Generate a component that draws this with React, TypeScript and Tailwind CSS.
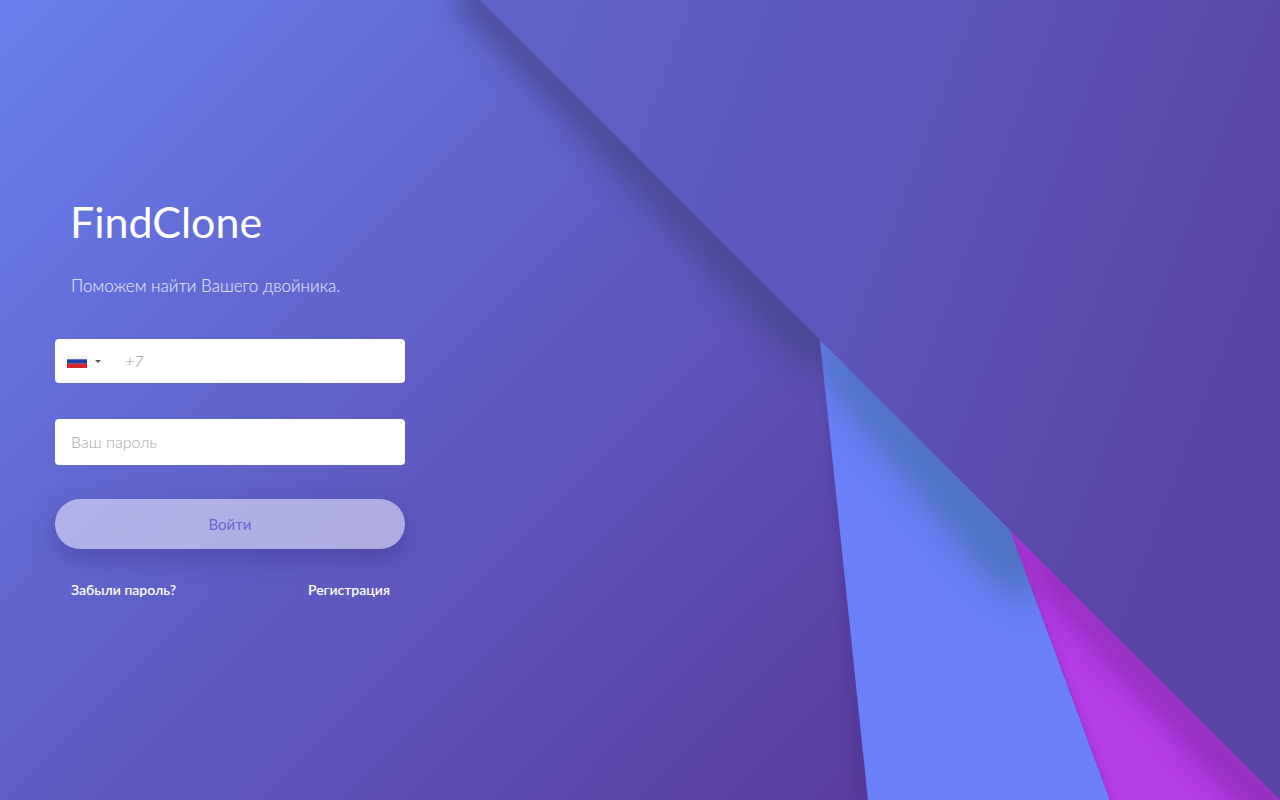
import React from 'react';

const Background: React.FC = () => (
  <svg className="absolute inset-0 h-full w-full" viewBox="0 0 1280 800" aria-hidden="true">
    <defs>
      <linearGradient id="topFold" gradientUnits="userSpaceOnUse" x1="480" y1="0" x2="1280" y2="300">
        <stop offset="0" stopColor="#6064c8" />
        <stop offset="0.5" stopColor="#5d56ba" />
        <stop offset="1" stopColor="#5a44a4" />
      </linearGradient>
      <clipPath id="leftArea"><polygon points="0,0 480,0 820,340 868,800 0,800" /></clipPath>
      <clipPath id="blueArea"><polygon points="820,340 1010,530 1110,800 868,800" /></clipPath>
      <clipPath id="purpleArea"><polygon points="1010,530 1280,800 1110,800" /></clipPath>
      <filter id="blur14" x="-30%" y="-30%" width="160%" height="160%"><feGaussianBlur stdDeviation="14" /></filter>
      <filter id="blur20" x="-30%" y="-30%" width="160%" height="160%"><feGaussianBlur stdDeviation="18" /></filter>
      <filter id="blur6" x="-30%" y="-30%" width="160%" height="160%"><feGaussianBlur stdDeviation="5" /></filter>
    </defs>

    {/* shadow under the big fold */}
    <g clipPath="url(#leftArea)">
      <polygon points="490,-30 850,330 825,370 805,370 450,0" fill="#454488" opacity="0.7" filter="url(#blur14)" />
      <polygon points="822,340 856,800 868,800 830,340" fill="#3c2a80" opacity="0.25" filter="url(#blur6)" />
    </g>

    <polygon points="820,340 1010,530 1110,800 868,800" fill="#6a80fb" />
    <g clipPath="url(#blueArea)">
      <polygon points="815,315 1040,540 1040,610 990,580 840,400 815,360" fill="#4a70b8" opacity="0.9" filter="url(#blur20)" />
    </g>

    <polygon points="1010,530 1280,800 1110,800" fill="#b53ce9" />
    <g clipPath="url(#purpleArea)">
      <polygon points="1000,505 1310,815 1270,840 1180,740 1040,590" fill="#8a2cb0" opacity="0.75" filter="url(#blur14)" />
      <polygon points="1010,530 1004,540 1104,810 1112,810" fill="#7a2aa0" opacity="0.7" filter="url(#blur6)" />
    </g>

    <polygon points="480,0 1280,0 1280,800" fill="url(#topFold)" />
  </svg>
);

const Flag: React.FC = () => (
  <svg width="20" height="13" viewBox="0 0 20 13" aria-hidden="true">
    <rect width="20" height="4.4" y="0" fill="#f4f4f4" />
    <rect width="20" height="4.4" y="4.3" fill="#1c3fa8" />
    <rect width="20" height="4.4" y="8.6" fill="#d8232a" />
  </svg>
);

const App: React.FC = () => {
  return (
    <div className="relative h-[800px] w-[1280px] overflow-hidden bg-[linear-gradient(135deg,#6880ee_0%,#5f5ec6_38%,#5a3a9c_82%)] font-['Lato','Noto_Sans',sans-serif]">
      <Background />

      <div className="relative flex w-[350px] flex-col pt-[196px] ml-[55px]">
        <h1 className="pl-[15px] text-[43px] leading-[52px] font-normal text-white">FindClone</h1>
        <p className="mt-[26px] pl-4 text-[17px] leading-6 font-light text-white/90">Поможем найти Вашего двойника.</p>

        <div className="mt-[41px] flex h-[44px] items-center rounded bg-white pl-3">
          <Flag />
          <span className="ml-2 h-0 w-0 border-x-[3px] border-t-[3px] border-x-transparent border-t-[#555]" />
          <span className="ml-[24px] text-[16px] font-light italic text-[#999]">+7</span>
        </div>

        <div className="mt-[36px] flex h-[46px] items-center rounded bg-white pl-4">
          <span className="text-[16px] font-light text-[#a8a8a8]">Ваш пароль</span>
        </div>

        <button className="mt-[34px] h-[50px] rounded-full bg-white/50 text-[15px] font-normal text-[#6a68d0] shadow-[0_10px_24px_rgba(50,40,120,0.35)]">
          Войти
        </button>

        <div className="mt-[32px] flex justify-between pl-4 pr-[15px] text-[14px] leading-[18px] font-semibold text-white">
          <a>Забыли пароль?</a>
          <a>Регистрация</a>
        </div>
      </div>
    </div>
  );
};

export default App;
